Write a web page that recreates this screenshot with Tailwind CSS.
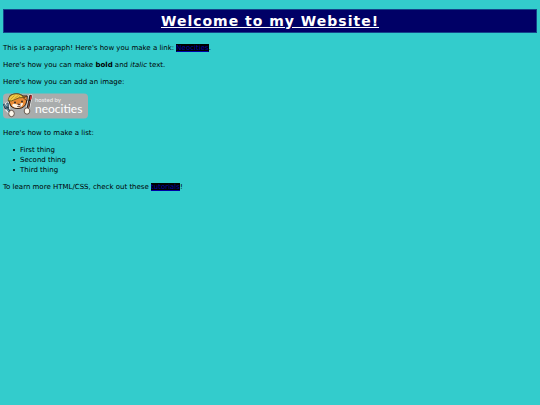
<!DOCTYPE html>
<html lang="en">
<head>
    <meta charset="utf-8">
    <meta name="viewport" content="width=device-width, initial-scale=1.0">
    <title>My Website</title>
    <script src="https://cdn.jsdelivr.net/npm/@tailwindcss/browser@4"></script>
</head>
<body class="min-h-screen bg-[#33cccc] px-[3px] py-[9px] font-['DejaVu_Sans',Verdana,sans-serif] text-[7px] leading-[10px] text-black">
    <h1 class="mb-[10px] border border-[#14438a] bg-[#000066] py-px text-center text-[14px] leading-[20px] font-bold tracking-[1px] text-white underline">Welcome to my Website!</h1>

    <main class="flex flex-col gap-[7px]">
        <p>This is a paragraph! Here's how you make a link: <a href="https://neocities.org" class="bg-black text-[#0000a8] underline">Neocities</a>.</p>

        <p>Here's how you can make <strong>bold</strong> and <em>italic</em> text.</p>

        <p>Here's how you can add an image:</p>

        <!-- Neocities badge -->
        <svg class="-mt-px h-[26px] w-[85px]" viewBox="0 0 85 26" role="img" aria-label="hosted by neocities">
            <rect width="85" height="25" y="0.5" rx="4" fill="#a9acac"/>
            <!-- fork -->
            <path d="M1.500 11.500l2 4.500 4 4M4.500 10.500l1 4.500" stroke="#eee" stroke-width="3.500" stroke-linecap="round" fill="none"/>
            <path d="M1 11.500l1.500 3.500 2.500-.5-.5-4M3.500 14.500l4 5" stroke="#263c4a" stroke-width="2.200" fill="none" stroke-linecap="round"/>
            <path d="M1.200 11.500l1.600 3M4.500 10.800l.5 3M4 15.500l3 4" stroke="#7fb4d0" stroke-width="0.800" fill="none" stroke-linecap="round"/>
            <!-- brush -->
            <path d="M27.500 3l-2.500 12" stroke="#eee" stroke-width="4" stroke-linecap="round"/>
            <path d="M27.500 3l-2.500 12" stroke="#1c1c1c" stroke-width="2.600" stroke-linecap="round"/>
            <path d="M26.500 8l-1.200 7" stroke="#93604a" stroke-width="1"/>
            <path d="M28 1.500q2 3-.5 6q-1.500-2 .5-6" fill="#d22c2c"/>
            <!-- cat head -->
            <path d="M6 8L7 2.500Q15-1 20 3L24 3L23.500 9Q22 15.500 15 15.500Q8 15.500 7 11Z" fill="#e88a35" stroke="#302217" stroke-width="1"/>
            <path d="M9 12q2-2 5-.5q4-2 6-1.500q0 4-5 5q-5 0-6-3" fill="#fff5e6"/>
            <path d="M5 7.500Q6 1 13 .8Q19 1 20.500 4.500Q16 4 12 6.500Q8 9 5 7.500" fill="#f0ca45" stroke="#594716" stroke-width="0.800"/>
            <path d="M7.500 6.500l4-4M11.500 5.500l4-3M15.500 4.500l2-2" stroke="#b88a24" stroke-width="0.700"/>
            <path d="M20.500 5l3.500-2v5z" fill="#eb9440" stroke="#302217" stroke-width="0.700"/>
            <circle cx="12" cy="9.500" r="0.900" fill="#222"/>
            <circle cx="19" cy="8.500" r="0.900" fill="#222"/>
            <path d="M14.500 11h3l-1.500 1.300zM14 13.500q2 .8 4-.7" fill="#4b2519" stroke="#4b2519" stroke-width="0.500"/>
            <!-- paws -->
            <ellipse cx="8.500" cy="20.500" rx="2.800" ry="3.200" fill="#fff8ec" stroke="#49372c" stroke-width="0.800"/>
            <ellipse cx="24" cy="18" rx="2.800" ry="3.200" fill="#fff8ec" stroke="#49372c" stroke-width="0.800"/>
            <text x="32" y="9" class="font-[Lato,sans-serif] text-[6px]" fill="#f1f1f1">hosted by</text>
            <text x="32" y="20" class="font-[Lato,sans-serif] text-[12px]" fill="#fff">neocities</text>
        </svg>

        <p class="mt-[2px]">Here's how to make a list:</p>

        <ul class="pl-[10px]">
            <li class="flex items-center gap-[5px] before:size-[2px] before:rounded-full before:bg-black">First thing</li>
            <li class="flex items-center gap-[5px] before:size-[2px] before:rounded-full before:bg-black">Second thing</li>
            <li class="flex items-center gap-[5px] before:size-[2px] before:rounded-full before:bg-black">Third thing</li>
        </ul>

        <p>To learn more HTML/CSS, check out these <a href="https://neocities.org/tutorials" class="bg-black text-[#0000a8] underline">tutorials</a>!</p>
    </main>
</body>
</html>
